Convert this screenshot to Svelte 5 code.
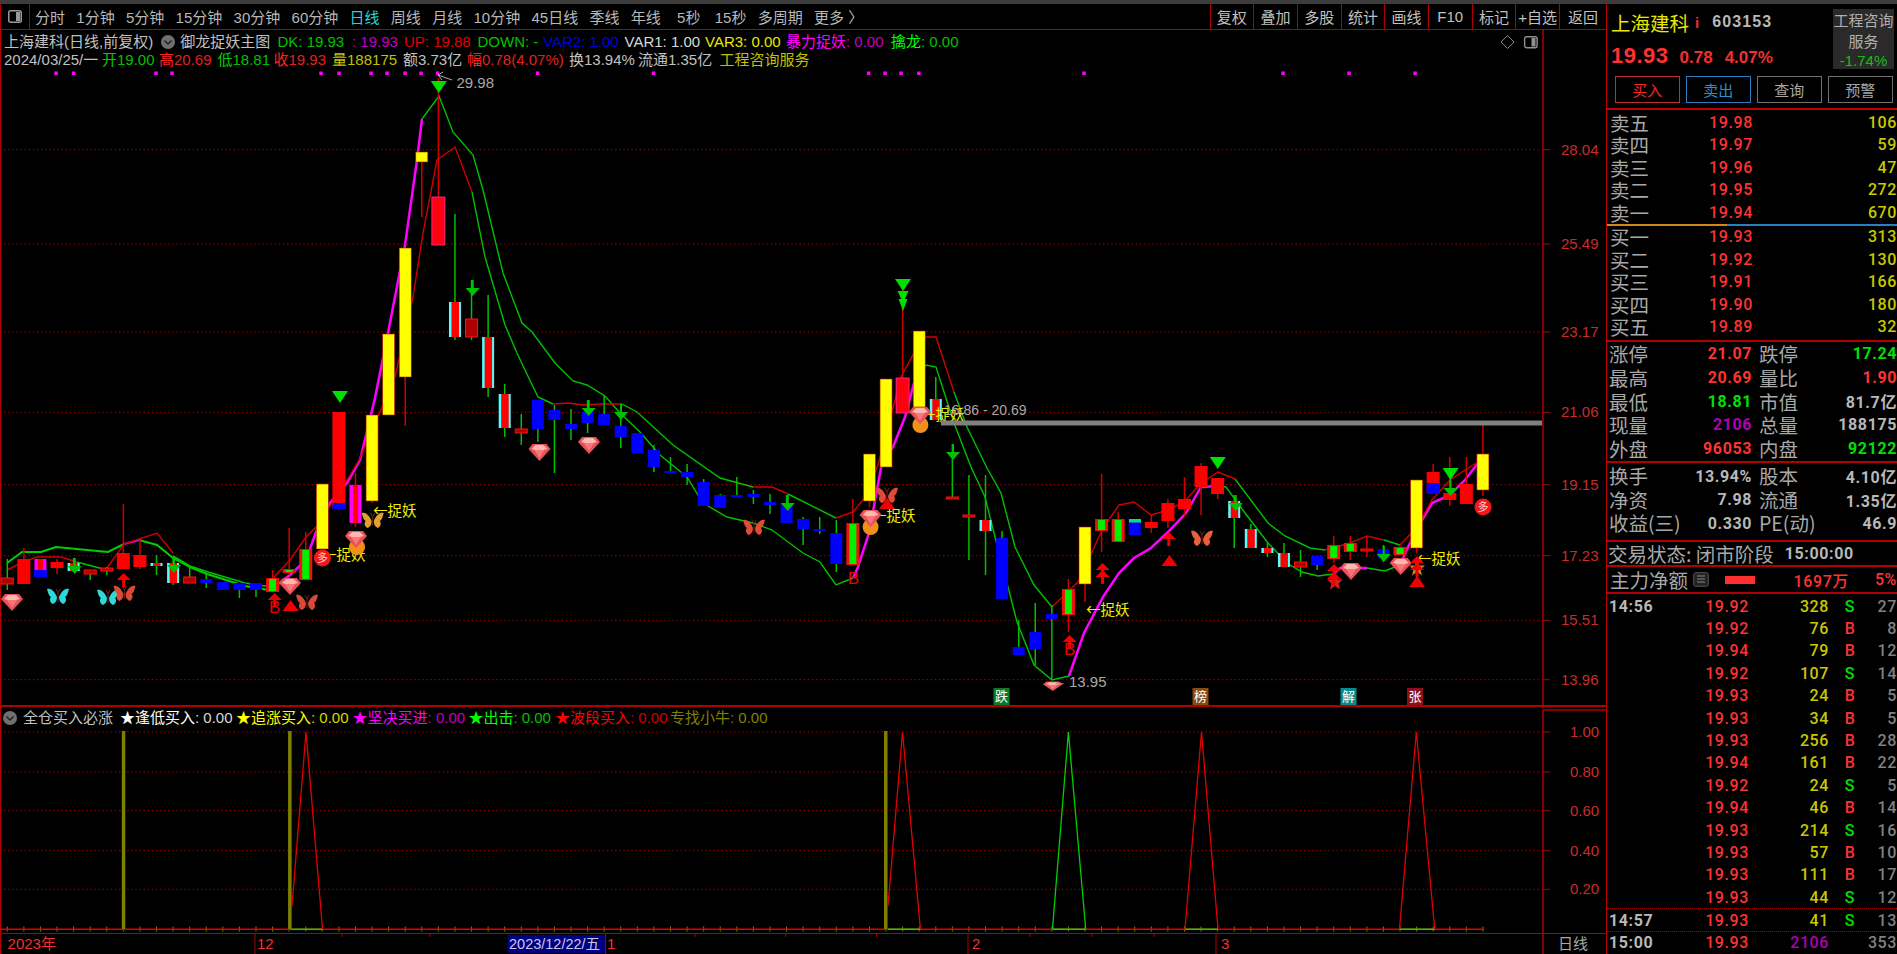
<script>
	const step = 16.58;
	const cx = (i) => 7.3 + step * i;

	// wick top, body top, body bottom, wick bottom, type, wick colour, split y (blue lower part)
	const candles = [
		[559, 578, 584, 590, 'o', 'g'], [548, 559, 584, 584, 'r', 'r'], [559, 559, 577, 575, 'm', 'g', 570],
		[559, 562, 568, 574, 'r', 'r'], [558, 563, 571, 572, 'c', 'g'], [570, 570, 574, 580, 'o', 'g'],
		[567, 568, 571, 575, 'o', 'g'], [504, 553, 569, 569, 'r', 'r'], [540, 555, 567, 569, 'r', 'r'],
		[555, 563, 566, 575, 'c', 'g'], [557, 563, 583, 585, 'c', 'g'], [567, 577, 583, 583, 'o', 'g'],
		[574, 579, 583, 588, 'b', 'g'], [582, 582, 590, 590, 'b', 'g'], [583, 583, 590, 598, 'b', 'g'],
		[583, 583, 590, 597, 'b', 'g'], [570, 578, 592, 592, 'g', 'r'], [528, 569, 573, 575, 'g', 'r'],
		[532, 549, 580, 580, 'g', 'r'], [484, 484, 549, 549, 'y', 'r'], [412, 412, 509, 509, 'r', 'r', 503],
		[473, 485, 523, 527, 'm', 'r'], [415, 415, 501, 503, 'y', 'r'], [334, 334, 415, 415, 'y', 'r'],
		[248, 248, 377, 426, 'y', 'r'], [152, 152, 162, 217, 'y', 'r'], [78, 197, 245, 245, 'p', 'r'],
		[214, 302, 337, 340, 'c', 'g'], [280, 319, 337, 340, 'o', 'g'], [295, 337, 388, 397, 'c', 'g'],
		[384, 394, 428, 437, 'c', 'g'], [414, 429, 433, 445, 'o', 'g'], [400, 400, 429, 442, 'b', 'g'],
		[405, 410, 420, 473, 'b', 'g'], [409, 424, 429, 440, 'b', 'g'], [400, 412, 423, 433, 'b', 'g'],
		[396, 414, 425, 425, 'b', 'g'], [404, 426, 437, 448, 'b', 'g'], [433, 433, 453, 453, 'b', 'g'],
		[445, 450, 467, 472, 'b', 'g'], [457, 471, 473, 473, 'b', 'g'], [464, 472, 477, 485, 'b', 'g'],
		[479, 482, 506, 506, 'b', 'g'], [494, 495, 508, 508, 'b', 'g'], [477, 495, 497, 497, 'b', 'g'],
		[490, 494, 497, 504, 'b', 'g'], [494, 502, 505, 514, 'b', 'g'], [495, 503, 523, 523, 'b', 'g'],
		[517, 519, 529, 545, 'b', 'g'], [517, 529, 531, 534, 'b', 'g'], [520, 533, 564, 572, 'b', 'g'],
		[499, 523, 565, 565, 'g', 'r'], [454, 454, 501, 507, 'y', 'r'], [379, 379, 467, 467, 'y', 'r'],
		[280, 378, 413, 413, 'p', 'r'], [331, 331, 407, 407, 'y', 'r'], [377, 399, 420, 420, 'c', 'g'],
		[444, 497, 499, 499, 'o', 'g'], [475, 515, 517, 560, 'o', 'g'], [475, 520, 531, 575, 'c', 'g'],
		[531, 538, 599, 599, 'b', 'g'], [620, 647, 655, 655, 'b', 'g'], [603, 632, 649, 665, 'b', 'g'],
		[605, 614, 619, 680, 'b', 'g'], [579, 589, 615, 632, 'g', 'r'], [527, 527, 584, 602, 'y', 'r'],
		[474, 519, 531, 552, 'g', 'r'], [512, 519, 542, 542, 'g', 'r'], [519, 519, 535, 535, 'b', 'r'],
		[515, 522, 528, 533, 'r', 'r'], [499, 503, 521, 528, 'r', 'r'], [477, 499, 509, 517, 'r', 'r'],
		[463, 466, 487, 515, 'r', 'r'], [478, 478, 494, 499, 'r', 'r'], [495, 501, 518, 548, 'c', 'g'],
		[524, 529, 548, 548, 'c', 'g'], [543, 548, 553, 557, 'c', 'g'], [543, 553, 567, 567, 'c', 'g'],
		[550, 562, 567, 577, 'o', 'g'], [556, 556, 565, 570, 'b', 'g'], [536, 545, 559, 563, 'g', 'r'],
		[536, 543, 552, 560, 'g', 'r'], [536, 549, 551, 557, 'o', 'r'], [545, 549, 558, 562, 'b', 'g'],
		[546, 547, 555, 555, 'g', 'r'], [480, 480, 548, 553, 'y', 'r'], [464, 472, 494, 494, 'r', 'r', 483],
		[457, 493, 500, 506, 'r', 'r'], [457, 484, 504, 504, 'r', 'r'], [425, 454, 490, 496, 'y', 'r']
	];

	const lines = [
		{ c: '#00d000', w: 2, p: '7,563 22,552 41,552 56,547 108,552 124,544' },
		{ c: '#ff00ff', w: 2, p: '124,544 139,540' },
		{ c: '#00d000', w: 2, p: '139,540 157,545 173,558 190,567 207,574 245,586 274,591' },
		{ c: '#ff00ff', w: 2.5, p: '274,587 290,575 306,560 316,532 330,503 347,483 360,460 375,398 388,333 405,245 417,160 422,119' },
		{ c: '#00c000', w: 1.4, p: '422,119 439,96 453,132 473,155 483,190 503,273 522,323 532,332 555,363 562,370 573,381 587,385 605,396 620,413 640,432 660,455 687,477 698,495 708,506 727,517 753,523 772,530 803,553 820,562 836,585 853,578' },
		{ c: '#ff00ff', w: 2.5, p: '853,578 858,567 869,533 881,468 893,447 905,417 914,383' },
		{ c: '#00c000', w: 1.4, p: '914,383 926,365 936,367 954,423 971,467 985,497 995,537 1008,587 1017,622 1034,665 1052,680 1069,676' },
		{ c: '#ff00ff', w: 2.5, p: '1069,676 1084,633 1103,597 1119,573 1134,558 1151,548 1168,532 1186,513 1201,487 1218,486' },
		{ c: '#00c000', w: 1.4, p: '1218,486 1226,487 1245,513 1268,543 1287,563 1302,572 1318,576 1333,574' },
		{ c: '#ff00ff', w: 2.5, p: '1333,574 1340,568 1367,568' },
		{ c: '#00c000', w: 1.4, p: '1367,568 1385,571 1400,565' },
		{ c: '#ff00ff', w: 2.5, p: '1400,565 1408,547 1421,522 1432,503 1450,495 1465,480 1478,463' },
		{ c: '#d00000', w: 1.4, p: '7,570 25,561 37,557 61,557 77,562' },
		{ c: '#00c000', w: 1.6, p: '77,562 107,570' },
		{ c: '#d00000', w: 1.4, p: '107,568 124,544 157,533 173,553' },
		{ c: '#00c000', w: 1.6, p: '173,556 190,566 208,572 245,583 265,586 273,584' },
		{ c: '#d00000', w: 1.4, p: '273,578 290,560 306,537 316,527 349,477 359,460 395,377 413,297 423,233 437,160 455,147 472,192' },
		{ c: '#00c000', w: 1.4, p: '472,192 485,257 505,325 517,353 525,370 538,397 553,404' },
		{ c: '#d00000', w: 1.4, p: '553,404 568,403 583,405 600,404 622,404' },
		{ c: '#00c000', w: 1.4, p: '622,404 637,412 673,445 720,478 753,487' },
		{ c: '#d00000', w: 1.4, p: '753,487 772,487 788,494' },
		{ c: '#00c000', w: 1.4, p: '788,494 836,518' },
		{ c: '#d00000', w: 1.4, p: '836,518 853,512 863,500 878,465 901,377 914,353 926,337 936,337 954,392' },
		{ c: '#00c000', w: 1.4, p: '954,392 967,427 987,468 1001,493 1015,547 1034,585 1052,607' },
		{ c: '#d00000', w: 1.4, p: '1052,607 1078,582 1092,552 1103,528 1119,505 1134,502 1151,515 1168,510 1184,502 1201,483 1218,472 1235,479' },
		{ c: '#00c000', w: 1.4, p: '1235,479 1268,523 1285,536 1310,548 1325,550' },
		{ c: '#d00000', w: 1.4, p: '1325,550 1350,543 1367,536 1384,540' },
		{ c: '#00c000', w: 1.4, p: '1384,540 1400,545' },
		{ c: '#d00000', w: 1.4, p: '1400,545 1417,527 1432,500 1450,480 1465,470 1478,462' }
	];

	const grid = [
		{ y: 149.7, t: '28.04' }, { y: 244, t: '25.49' }, { y: 332, t: '23.17' }, { y: 412.3, t: '21.06' },
		{ y: 484.7, t: '19.15' }, { y: 555.7, t: '17.23' }, { y: 620.3, t: '15.51' }, { y: 679.7, t: '13.96' }
	];
	const subGrid = [
		{ y: 732, t: '1.00' }, { y: 772, t: '0.80' }, { y: 810.7, t: '0.60' }, { y: 850.7, t: '0.40' }, { y: 889.3, t: '0.20' }
	];
	const dots = [56, 73.5, 156, 172, 321, 339, 371, 387, 405, 421, 437.5, 537.5, 653.5, 868.6, 885, 901, 918.8, 1084, 1283, 1349, 1415];

	const gems = [[12, 602], [290, 586], [356, 539], [539.5, 452], [589, 445], [920, 415], [870.6, 518], [1351, 571], [1400.7, 566]];
	const flies = [
		[58, 596, '#2fd8d8'], [108, 597, '#2fd8d8'], [124.5, 593, '#d84a36'], [307, 602, '#d84a36'], [372.7, 520, '#e0a030'],
		[754, 527, '#e04a36'], [887, 495, '#e04a36'], [1202, 538, '#e8603c']
	];
	const bigDown = [[438.8, 87, 16], [340, 397, 16], [903, 285, 16], [903, 297, 11], [903, 305, 9], [1217.8, 463, 16], [1450.5, 474, 16]];
	const downArrows = [[74.7, 558], [174, 557], [472.7, 280], [588.7, 400], [621, 404], [787.8, 495], [953, 444], [1235.7, 495], [1383.8, 546], [1450.5, 480]];
	const upArrows = [[123.7, 573], [274.7, 593], [1102.6, 563], [1102.6, 570], [1168.8, 532], [1069.6, 635], [1334, 564], [1334, 572], [1417, 556], [1417, 563]];
	const triangles = [[290.6, 606], [887, 504], [1169.5, 561], [1417, 582]];
	const stars = [[1335, 582, '#d02020'], [1417, 568, '#c88020']];
	const letters = [[274.7, 613], [853.3, 584], [1069.6, 655]];
	const balls = [[322.4, 558, '#f01818'], [1483, 507, '#f01818']];
	const orangeBalls = [[357, 547], [920.4, 425], [870.6, 527]];
	const catchers = [[373, 516], [322, 560], [872, 521], [921, 420], [1086, 615], [1417, 564]];
	const badges = [
		{ x: 1001.5, t: '跌', c: '#0a7a2a' }, { x: 1200.5, t: '榜', c: '#8a4a10' },
		{ x: 1348.5, t: '解', c: '#0a8a8a' }, { x: 1415, t: '张', c: '#8a1020' }
	];

	const olive = [123.5, 289.8, 885.7];
	const peaks = [
		{ l: 292, t: 906, a: 306, r: 322.5, c: '#e00000', b: 291 },
		{ l: 888, t: 906, a: 902.5, r: 920.4, c: '#e00000', b: 888 },
		{ l: 1052.5, t: 929, a: 1068.4, r: 1085.7, c: '#00d000', b: 1052.5 },
		{ l: 1185, t: 929, a: 1201.5, r: 1218, c: '#e00000', b: 1185 },
		{ l: 1399.5, t: 929, a: 1416.3, r: 1434.7, c: '#e00000', b: 1399.5 }
	];
	const dateTicks = [342, 430, 695, 785.7, 876.5, 1030, 1092, 1154];

	const tabs = [
		{ t: '分时' }, { t: '1分钟' }, { t: '5分钟' }, { t: '15分钟' }, { t: '30分钟' }, { t: '60分钟' },
		{ t: '日线', on: true }, { t: '周线' }, { t: '月线' }, { t: '10分钟' }, { t: '45日线' }, { t: '季线' },
		{ t: '年线' }, { t: '5秒', m: 5 }, { t: '15秒', m: 3 }, { t: '多周期' }, { t: '更多 〉' }
	];
	const tools = ['复权', '叠加', '多股', '统计', '画线', 'F10', '标记', '+自选', '返回'];

	const legendA = [
		{ w: 273.5, l: '', v: '', title: true },
		{ w: 74.5, l: 'DK: 19.93', v: '', c: '#00c000' },
		{ w: 52, l: ': 19.93', v: '', c: '#c000c0' },
		{ w: 73.5, l: 'UP: 19.88', v: '', c: '#e00000' },
		{ w: 65.5, l: 'DOWN: -', v: '', c: '#00c000' },
		{ w: 81.5, l: 'VAR2: 1.00', v: '', c: '#0000e0' },
		{ w: 80.5, l: 'VAR1: 1.00', v: '', c: '#d8d8d8' },
		{ w: 81, l: 'VAR3: 0.00', v: '', c: '#e8e800' },
		{ w: 105, l: '暴力捉妖', v: ': 0.00', c: '#ff00ff', d: '#c000c0' },
		{ w: 90, l: '擒龙', v: ': 0.00', c: '#00ff00', d: '#00c000' }
	];
	const legendB = [
		{ w: 98, l: '2024/03/25/一', v: '', c: '#c0c0c0' },
		{ w: 57, l: '开', v: '19.00', c: '#00d000', d: '#00c000' },
		{ w: 58.5, l: '高', v: '20.69', c: '#ff2020', d: '#e02020' },
		{ w: 56, l: '低', v: '18.81', c: '#00d000', d: '#00c000' },
		{ w: 58.5, l: '收', v: '19.93', c: '#ff2020', d: '#e02020' },
		{ w: 71, l: '量', v: '188175', c: '#c0c000', d: '#c0c000' },
		{ w: 64, l: '额', v: '3.73亿', c: '#c0c0c0', d: '#c0c0c0' },
		{ w: 102, l: '幅', v: '0.78(4.07%)', c: '#ff2020', d: '#e02020' },
		{ w: 69, l: '换', v: '13.94%', c: '#c0c0c0', d: '#c0c0c0' },
		{ w: 81.6, l: '流通', v: '1.35亿', c: '#c0c0c0', d: '#c0c0c0' },
		{ w: 110, l: '工程咨询服务', v: '', c: '#c0c000' }
	];
	const subLegend = [
		{ w: 116, s: '★', l: '逢低买入', v: ': 0.00', c: '#ffffff', d: '#d8d8d8' },
		{ w: 116.6, s: '★', l: '追涨买入', v: ': 0.00', c: '#ffff00', d: '#d8d800' },
		{ w: 115.8, s: '★', l: '坚决买进', v: ': 0.00', c: '#ff00ff', d: '#c000c0' },
		{ w: 86.6, s: '★', l: '出击', v: ': 0.00', c: '#00ff00', d: '#00c000' },
		{ w: 115, s: '★', l: '波段买入', v: ': 0.00', c: '#ff0000', d: '#d00000' },
		{ w: 110, s: '', l: '专找小牛', v: ': 0.00', c: '#808000', d: '#808000' }
	];

	const sell = [['卖五', '19.98', '106'], ['卖四', '19.97', '59'], ['卖三', '19.96', '47'], ['卖二', '19.95', '272'], ['卖一', '19.94', '670']];
	const buy = [['买一', '19.93', '313'], ['买二', '19.92', '130'], ['买三', '19.91', '166'], ['买四', '19.90', '180'], ['买五', '19.89', '32']];
	const stats = [
		['涨停', '21.07', 'up', '跌停', '17.24', 'down'],
		['最高', '20.69', 'up', '量比', '1.90', 'up'],
		['最低', '18.81', 'down', '市值', '81.7亿', 'flat'],
		['现量', '2106', 'vol', '总量', '188175', 'flat'],
		['外盘', '96053', 'up', '内盘', '92122', 'down']
	];
	const stats2 = [
		['换手', '13.94%', 'flat', '股本', '4.10亿', 'flat'],
		['净资', '7.98', 'flat', '流通', '1.35亿', 'flat'],
		['收益(三)', '0.330', 'flat', 'PE(动)', '46.9', 'flat']
	];
	const trades = [
		['14:56', '19.92', '328', 'S', '27'], ['', '19.92', '76', 'B', '8'], ['', '19.94', '79', 'B', '12'],
		['', '19.92', '107', 'S', '14'], ['', '19.93', '24', 'B', '5'], ['', '19.93', '34', 'B', '5'],
		['', '19.93', '256', 'B', '28'], ['', '19.94', '161', 'B', '22'], ['', '19.92', '24', 'S', '5'],
		['', '19.94', '46', 'B', '14'], ['', '19.93', '214', 'S', '16'], ['', '19.93', '57', 'B', '10'],
		['', '19.93', '111', 'B', '17'], ['', '19.93', '44', 'S', '12'], ['14:57', '19.93', '41', 'S', '13'],
		['15:00', '19.93', '2106', '', '353']
	];
</script>

<div class="app">
	<div class="strip"></div>
	<div class="main">
		<div class="left">
			<nav class="toolbar">
				<div class="panel-btn">
					<svg width="14" height="13" viewBox="0 0 14 13">
						<rect x="0.75" y="0.75" width="12.5" height="11.5" rx="2" fill="none" stroke="#9a9a9a" stroke-width="1.5" />
						<rect x="8" y="2" width="4" height="9" fill="#9a9a9a" />
					</svg>
				</div>
				<div class="tabs">
					{#each tabs as tab}
						<span class:on={tab.on} style={tab.m ? `margin-left:${tab.m}px` : undefined}>{tab.t}</span>
					{/each}
				</div>
				<div class="tools">
					{#each tools as tool}
						<span>{tool}</span>
					{/each}
				</div>
			</nav>

			<section class="chart">
				<div class="legend">
					<div class="row">
						<div class="title" style="width:{legendA[0].w}px">
							<span>上海建科(日线,前复权)</span>
							<svg class="chev" width="14" height="14" viewBox="0 0 14 14">
								<circle cx="7" cy="7" r="7" fill="#707070" />
								<path d="M3.5 5.5 L7 9 L10.5 5.5" fill="none" stroke="#222" stroke-width="1.5" />
							</svg>
							<span>御龙捉妖主图</span>
						</div>
						{#each legendA.slice(1) as item}
							<div style="width:{item.w}px;color:{item.c}">{item.l}<span style="color:{item.d}">{item.v}</span></div>
						{/each}
					</div>
					<div class="row">
						{#each legendB as item}
							<div style="width:{item.w}px;color:{item.c}">{item.l}<span style="color:{item.d}">{item.v}</span></div>
						{/each}
					</div>
				</div>

				<svg class="plot" width="1606" height="677" viewBox="0 30 1606 677">
					<defs>
						<g id="gem">
							<path d="M-11 -3 L-7 -8 L7 -8 L11 -3 L0 9 Z" fill="#e8505a" />
							<path d="M-8 -3 L-4 -7 L4 -7 L8 -3 L0 -1 Z" fill="#ffb8b0" />
							<path d="M-5 -2 L0 6 L5 -2 Z" fill="#f87878" />
						</g>
						<g id="fly">
							<path d="M-1 1 C-4 -6 -8 -8 -11 -7 C-10 -3 -9 0 -7 1 C-9 3 -8 7 -5 8 C-3 7 -1 5 -1 1 Z" />
							<path d="M1 1 C4 -6 8 -8 11 -7 C10 -3 9 0 7 1 C9 3 8 7 5 8 C3 7 1 5 1 1 Z" />
							<path d="M0 -3 L0 6 M0 -3 L-2 -7 M0 -3 L2 -7" stroke="#702020" stroke-width="1" fill="none" />
						</g>
						<g id="down">
							<path d="M-1 0 H1 V8 H7 L0 16 L-7 8 H-1 Z" fill="#00c000" />
						</g>
						<g id="up">
							<path d="M0 0 L7 7 H1.5 V14 H-1.5 V7 H-7 Z" fill="#f00000" />
						</g>
						<g id="star">
							<polygon points="0,-8 2.4,-2.5 8,-2.5 3.6,1.5 5,7.5 0,4 -5,7.5 -3.6,1.5 -8,-2.5 -2.4,-2.5" />
						</g>
					</defs>

					<line class="tick wide" x1="0.5" x2="0.5" y1="30" y2="707" />
					<line class="tick wide" x1="1543" x2="1543" y1="30" y2="707" />

					{#each grid as g}
						<line class="dot" x1="0" x2="1542" y1={g.y} y2={g.y} />
						<line class="tick" x1="1543" x2="1550" y1={g.y} y2={g.y} />
						<text class="axis" x="1561" y={g.y + 5}>{g.t}</text>
					{/each}

					{#each dots as x}
						<rect x={x - 1.7} y="71.5" width="3.5" height="3.5" fill="#ff00ff" />
					{/each}

					{#each lines as line}
						<polyline points={line.p} fill="none" stroke={line.c} stroke-width={line.w} />
					{/each}

					{#each candles as [wt, t, b, wb, type, wick, split], i}
						{@const x = cx(i)}
						<line x1={x} x2={x} y1={wt} y2={wb} stroke={wick === 'r' ? '#d00000' : '#00c000'} stroke-width="1.5" />
						{#if type === 'r'}
							<rect x={x - 6.5} y={t} width="13" height={b - t} fill="#ff0000" />
						{:else if type === 'p'}
							<rect x={x - 6.5} y={t} width="13" height={b - t} fill="#ff0010" stroke="#ff30b0" stroke-width="0.8" />
						{:else if type === 'b'}
							<rect x={x - 6} y={t} width="12" height={b - t} fill="#0000ff" />
						{:else if type === 'y'}
							<rect x={x - 6} y={t} width="12" height={b - t} fill="#ffff00" stroke="#c01010" stroke-width="0.6" />
						{:else if type === 'o'}
							<rect x={x - 6} y={t} width="12" height={Math.max(b - t, 2)} fill="#b00000" stroke="#ff1010" />
						{:else if type === 'c'}
							<rect x={x - 6} y={t} width="12" height={b - t} fill="#50ffff" />
							<rect x={x - 3.5} y={t} width="7.5" height={b - t} fill="#ff0000" />
						{:else if type === 'g'}
							<rect x={x - 6.5} y={t} width="13" height={b - t} fill="#f01010" />
							<rect x={x - 3.5} y={t + 1} width="7" height={b - t - 2} fill="#00f000" />
						{:else if type === 'm'}
							<rect x={x - 6} y={t} width="12" height={b - t} fill="#ff00ff" />
							<rect x={x - 2.5} y={t} width="5" height={b - t} fill="#ff0000" />
						{/if}
						{#if split}
							<rect x={x - 6.5} y={split} width="13" height={b - split} fill="#0000ff" />
						{/if}
					{/each}
					<rect x="1129" y="519" width="12" height="3.5" fill="#00e080" />

					{#each catchers as [x, y]}
						<text class="catch" {x} {y}>←捉妖</text>
					{/each}
					{#each orangeBalls as [x, y]}
						<circle cx={x} cy={y} r="8" fill="#f09018" />
					{/each}
					{#each gems as [x, y]}
						<use href="#gem" {x} {y} />
					{/each}
					<use href="#gem" x="0" y="0" transform="translate(1052.8 686) scale(0.9 0.55)" />
					{#each flies as [x, y, c]}
						<use href="#fly" {x} {y} fill={c} />
					{/each}
					{#each bigDown as [x, y, w]}
						<polygon points="{x - w / 2},{y - 6} {x + w / 2},{y - 6} {x},{y + 6}" fill="#00e000" />
					{/each}
					{#each downArrows as [x, y]}
						<use href="#down" {x} {y} />
					{/each}
					{#each stars as [x, y, c]}
						<use href="#star" {x} {y} fill={c} />
					{/each}
					{#each upArrows as [x, y]}
						<use href="#up" {x} {y} />
					{/each}
					{#each triangles as [x, y]}
						<polygon points="{x - 8},{y + 5} {x + 8},{y + 5} {x},{y - 6}" fill="#f00000" />
					{/each}
					{#each letters as [x, y]}
						<text class="letter" {x} {y}>B</text>
					{/each}
					{#each balls as [x, y, c]}
						<circle cx={x} cy={y} r="8.5" fill={c} />
						<text class="ball" {x} y={y + 4}>多</text>
					{/each}

					<rect x="941" y="420.5" width="601" height="5" fill="#808080" />
					<text class="note" x="944" y="415">16.86 - 20.69</text>
					<path d="M438 75 L452 80 M438 75 L443 72 M438 75 L442 80" stroke="#b0b0b0" fill="none" />
					<text class="note big" x="456.5" y="88">29.98</text>
					<text class="note big" x="1069" y="687">13.95</text>
					<text class="note big" x="1052" y="686">←</text>

					{#each badges as b}
						<rect x={b.x - 8} y="688" width="16" height="17" fill={b.c} />
						<text class="badge" x={b.x} y="701">{b.t}</text>
					{/each}

					<g transform="translate(1507.6 42)">
						<path d="M0 -6.5 L6.5 0 L0 6.5 L-6.5 0 Z" fill="none" stroke="#909090" />
					</g>
					<rect x="1524.6" y="36.7" width="12.5" height="11" rx="2" fill="none" stroke="#909090" stroke-width="1.4" />
					<rect x="1531.5" y="38" width="4" height="8.5" fill="#909090" />
				</svg>
			</section>

			<section class="sub">
				<div class="legend">
					<div class="row">
						<div class="title sub-title">
							<svg width="14" height="14" viewBox="0 0 14 14">
								<circle cx="7" cy="7" r="7" fill="#707070" />
								<path d="M3.5 5.5 L7 9 L10.5 5.5" fill="none" stroke="#222" stroke-width="1.5" />
							</svg>
							<span>全仓买入必涨</span>
						</div>
						{#each subLegend as item}
							<div style="width:{item.w}px;color:{item.c}">{item.s}{item.l}<span style="color:{item.d}">{item.v}</span></div>
						{/each}
					</div>
				</div>
				<svg class="plot" width="1606" height="226" viewBox="0 707 1606 226">
					<line class="tick wide" x1="0.5" x2="0.5" y1="707" y2="933" />
					<line class="tick wide" x1="1543" x2="1543" y1="710" y2="933" />
					<line class="tick wide" x1="1543" x2="1606" y1="710" y2="710" />
					{#each subGrid as g}
						<line class="dot" x1="0" x2="1542" y1={g.y} y2={g.y} />
						<line class="tick" x1="1543" x2="1550" y1={g.y} y2={g.y} />
						<text class="axis" x="1570" y={g.y + 5}>{g.t}</text>
					{/each}
					{#each candles as _, i}
						<line x1={cx(i)} x2={cx(i)} y1="926.5" y2="931.5" stroke="#808000" />
					{/each}
					<line x1="0" x2="1484" y1="929.3" y2="929.3" stroke="#e00000" stroke-width="1.5" />
					{#each olive as x}
						<rect x={x - 1.7} y="731" width="3.5" height="198" fill="#808000" />
					{/each}
					{#each peaks as p}
						<line x1={p.b} x2={p.r} y1="929.3" y2="929.3" stroke="#00e000" stroke-width="1.5" />
						<polyline points="{p.l},{p.t} {p.a},732 {p.r},929" fill="none" stroke={p.c} stroke-width="1.3" />
					{/each}
				</svg>
			</section>

			<svg class="dates" width="1606" height="20" viewBox="0 933 1606 20">
				<rect x="507.6" y="934" width="98" height="18" fill="#000080" />
				<line class="tick wide" x1="0.5" x2="0.5" y1="933" y2="953" />
				<line class="tick wide" x1="1543" x2="1543" y1="933" y2="953" />
				<line x1="255" x2="255" y1="933" y2="953" class="tick" />
				<line x1="968" x2="968" y1="933" y2="953" class="tick" />
				<line x1="1216" x2="1216" y1="933" y2="953" class="tick" />
				<line x1="605.6" x2="605.6" y1="933" y2="953" class="tick" />
				{#each dateTicks as x}
					<line x1={x} x2={x} y1="933" y2="936" class="tick" />
				{/each}
				<text class="date" x="7.6" y="948">2023年</text>
				<text class="date" x="257" y="948">12</text>
				<text class="date sel" x="509" y="948">2023/12/22/五</text>
				<text class="date" x="607" y="948">1</text>
				<text class="date" x="972" y="948">2</text>
				<text class="date" x="1221" y="948">3</text>
				<text class="date gray" x="1558" y="948">日线</text>
			</svg>
		</div>

		<aside class="side">
			<header class="head">
				<div class="head-top">
					<div class="head-info">
						<div class="name-line">
							<span class="name">上海建科</span>
							<span class="info-i">i</span>
							<span class="code">603153</span>
						</div>
						<div class="price-line">
							<span class="price">19.93</span>
							<span class="delta">0.78</span>
							<span class="delta">4.07%</span>
						</div>
					</div>
					<div class="sector">
						<span>工程咨询</span>
						<span>服务</span>
						<span class="sector-pct">-1.74%</span>
					</div>
				</div>
				<div class="actions">
					<button class="buy">买入</button>
					<button class="sell">卖出</button>
					<button>查询</button>
					<button>预警</button>
				</div>
			</header>

			<div class="book sell-side">
				{#each sell as [l, p, v]}
					<div class="book-row"><span class="lab">{l}</span><b class="up">{p}</b><b class="qty">{v}</b></div>
				{/each}
			</div>
			<div class="book-split"></div>
			<div class="book">
				{#each buy as [l, p, v]}
					<div class="book-row"><span class="lab">{l}</span><b class="up">{p}</b><b class="qty">{v}</b></div>
				{/each}
			</div>

			<div class="stats first">
				{#each stats as [a, b, c, d, e, f]}
					<div class="stat-row">
						<span class="lab">{a}</span><b class={c}>{b}</b>
						<span class="lab">{d}</span><b class={f}>{e}</b>
					</div>
				{/each}
			</div>
			<div class="stats second">
				{#each stats2 as [a, b, c, d, e, f]}
					<div class="stat-row">
						<span class="lab">{a}</span><b class={c}>{b}</b>
						<span class="lab">{d}</span><b class={f}>{e}</b>
					</div>
				{/each}
			</div>

			<div class="status"><span class="lab">交易状态: 闭市阶段</span><b class="flat">15:00:00</b></div>
			<div class="flow">
				<span class="lab">主力净额</span>
				<svg width="16" height="15" viewBox="0 0 16 15">
					<rect x="0.7" y="0.7" width="14.6" height="13.6" rx="2" fill="#222" stroke="#555" />
					<path d="M4 4 H12 M4 7 H12 M4 10 H12" stroke="#888" />
				</svg>
				<i class="flow-bar"></i>
				<b class="up flow-val">1697万</b>
				<b class="up flow-pct">5%</b>
			</div>

			<div class="trades">
				{#each trades as [time, p, v, s, n]}
					<div class="trade" class:dotted={time === '14:57' || time === '15:00'}>
						<b class="time">{time}</b>
						<b class="up t-price">{p}</b>
						<b class="t-vol" class:vol={v === '2106'}>{v}</b>
						<b class="t-side" class:up={s === 'B'} class:down={s === 'S'}>{s}</b>
						<b class="t-num">{n}</b>
					</div>
				{/each}
			</div>
		</aside>
	</div>
</div>

<style>
	:global(body) {
		margin: 0;
		background: #000;
	}
	.app {
		width: 1897px;
		height: 954px;
		background: #000;
		overflow: hidden;
		display: flex;
		flex-direction: column;
		font-family: 'Liberation Sans', 'Noto Sans CJK SC', sans-serif;
		font-size: 15px;
		color: #c0c0c0;
	}
	.strip {
		height: 4px;
		background: #3c3c3c;
		flex: none;
	}
	.main {
		display: flex;
		flex: 1;
		min-height: 0;
	}
	.left {
		width: 1606px;
		flex: none;
		display: flex;
		flex-direction: column;
	}
	.toolbar {
		height: 25px;
		flex: none;
		border-bottom: 1px solid #b00000;
		display: flex;
		align-items: stretch;
		white-space: nowrap;
	}
	.panel-btn {
		width: 28px;
		flex: none;
		border-left: 1px solid #b00000;
		border-right: 1px solid #b00000;
		display: flex;
		align-items: center;
		justify-content: center;
	}
	.tabs {
		display: flex;
		align-items: center;
		gap: 11.3px;
		padding-left: 5px;
		color: #b8b8b8;
	}
	.tabs .on {
		color: #30d0d8;
	}
	.tools {
		margin-left: auto;
		display: flex;
	}
	.tools span {
		width: 42.7px;
		border-left: 1px solid #b00000;
		display: flex;
		align-items: center;
		justify-content: center;
		color: #c0c0c0;
	}
	.tools span:last-child {
		width: 46px;
	}
	.chart {
		position: relative;
		height: 677px;
		flex: none;
		border-bottom: 2px solid #b00000;
		box-sizing: border-box;
	}
	.legend {
		position: absolute;
		top: 3px;
		left: 4px;
		z-index: 1;
		line-height: 17.6px;
		white-space: nowrap;
	}
	.row {
		display: flex;
		height: 17.6px;
	}
	.title {
		display: flex;
		align-items: center;
		gap: 8px;
		color: #c0c0c0;
	}
	.chev {
		flex: none;
		margin-right: -3px;
	}
	.plot {
		display: block;
	}
	.dot {
		stroke: #a80000;
		stroke-width: 1;
		stroke-dasharray: 1.5 2.6;
	}
	.tick {
		stroke: #b00000;
		stroke-width: 1;
	}
	.tick.wide {
		stroke-width: 1.5;
	}
	.axis {
		fill: #c82c2c;
		font-size: 15px;
	}
	.catch {
		fill: #f0f000;
		font-size: 14.5px;
		font-family: 'Noto Sans CJK SC', sans-serif;
	}
	.letter {
		fill: #f00000;
		font-size: 17px;
		text-anchor: middle;
	}
	.ball {
		fill: #ffd0d0;
		font-size: 11px;
		text-anchor: middle;
		font-family: 'Noto Sans CJK SC', sans-serif;
	}
	.note {
		fill: #a8a8a8;
		font-size: 14px;
	}
	.note.big {
		font-size: 15px;
	}
	.badge {
		fill: #fff;
		font-size: 13px;
		text-anchor: middle;
		font-family: 'Noto Sans CJK SC', sans-serif;
	}
	.sub {
		position: relative;
		height: 226px;
		flex: none;
		border-bottom: 1px solid #b00000;
		box-sizing: content-box;
	}
	.sub .legend {
		top: 2px;
		left: 3px;
	}
	.sub-title {
		width: 117px;
		gap: 6px;
		flex: none;
	}
	.dates {
		display: block;
		flex: none;
		border-bottom: 1px solid #b00000;
	}
	.date {
		fill: #f03030;
		font-size: 15px;
	}
	.date.sel {
		fill: #c8c8e8;
		font-size: 14.5px;
	}
	.date.gray {
		fill: #a8a8a8;
	}

	.side {
		width: 291px;
		flex: none;
		border-left: 1px solid #c00000;
		box-sizing: border-box;
		display: flex;
		flex-direction: column;
		min-width: 0;
		overflow: hidden;
	}
	.head {
		height: 106px;
		flex: none;
		border-bottom: 2px solid #c00000;
		box-sizing: border-box;
		padding: 6px 3px 0 8px;
		display: flex;
		flex-direction: column;
	}
	.head-top {
		display: flex;
		justify-content: space-between;
		height: 60px;
		margin-top: -1px;
		flex: none;
	}
	.head-info {
		margin-left: -4px;
	}
	.name-line {
		display: flex;
		align-items: center;
		height: 26px;
	}
	.name {
		font-size: 19.5px;
		color: #e8e800;
		font-family: 'Noto Sans CJK SC', sans-serif;
	}
	.info-i {
		color: #e83030;
		font-weight: bold;
		font-size: 15px;
		margin: 0 13px 0 6px;
	}
	.code {
		font-weight: bold;
		font-size: 16px;
		letter-spacing: 1.1px;
		color: #b8b8b8;
	}
	.price-line {
		display: flex;
		align-items: baseline;
		margin-top: 8px;
	}
	.price {
		font-weight: bold;
		font-size: 22px;
		color: #ff3030;
		letter-spacing: 0.5px;
		margin-right: 11px;
	}
	.delta {
		font-weight: bold;
		font-size: 17px;
		color: #f03030;
		margin-right: 12px;
	}
	.sector {
		width: 61px;
		height: 60px;
		background: #2a2a2a;
		display: flex;
		flex-direction: column;
		align-items: center;
		justify-content: space-around;
		font-size: 15px;
		color: #b0b0b0;
		margin-top: 0;
	}
	.sector-pct {
		color: #10c010;
	}
	.actions {
		display: flex;
		gap: 6.5px;
		margin-top: 7px;
	}
	.actions button {
		width: 64.5px;
		height: 27px;
		padding: 0;
		background: #000;
		border: 1px solid #707070;
		color: #a8a8a8;
		font: 15px 'Noto Sans CJK SC', sans-serif;
	}
	.actions .buy {
		border-color: #c03030;
		color: #f02828;
	}
	.actions .sell {
		border-color: #2a7fc0;
		color: #2a90d0;
	}
	.book {
		flex: none;
	}
	.sell-side {
		padding-top: 1px;
	}
	.book-row {
		display: grid;
		grid-template-columns: 99px 44px 1fr;
		align-items: center;
		height: 22.5px;
		padding-left: 3px;
	}
	.lab {
		font-size: 19.5px;
		color: #a8a8a8;
		font-family: 'Noto Sans CJK SC', sans-serif;
		font-weight: 400;
		line-height: 1;
		white-space: nowrap;
	}
	b {
		font-family: Roboto, 'Liberation Sans', 'Noto Sans CJK SC', sans-serif;
		font-weight: 500;
		font-size: 16px;
		letter-spacing: 0.6px;
		white-space: nowrap;
	}
	.up {
		color: #ff3232;
	}
	.down {
		color: #00e000;
	}
	.flat {
		color: #b8b8b8;
	}
	.vol {
		color: #b000b0;
	}
	.qty {
		text-align: right;
		color: #c8c800;
	}
	.book-split {
		height: 2px;
		flex: none;
		background: linear-gradient(to right, #d08818 120px, #2a7fc0 120px);
	}
	.stats {
		flex: none;
		border-top: 2px solid #b00000;
		box-sizing: border-box;
	}
	.first {
		height: 121px;
		margin-top: 2px;
	}
	.second {
		height: 79px;
		padding-top: 1px;
	}
	.stat-row {
		display: grid;
		grid-template-columns: 66px 77px 46px 1fr;
		column-gap: 0;
		align-items: center;
		height: 23.7px;
		padding-left: 2px;
	}
	.stat-row b {
		text-align: right;
		font-weight: 700;
	}
	.stat-row .lab:nth-of-type(2) {
		padding-left: 7px;
	}
	.status {
		height: 25px;
		flex: none;
		border-top: 2px solid #b00000;
		box-sizing: border-box;
		display: flex;
		align-items: center;
		gap: 11px;
		padding-left: 1px;
	}
	.status b {
		font-weight: 700;
	}
	.flow {
		height: 29px;
		flex: none;
		border-top: 2px solid #b00000;
		border-bottom: 2px solid #b00000;
		box-sizing: border-box;
		display: flex;
		align-items: center;
		padding-left: 3px;
	}
	.flow svg {
		margin-left: 5px;
		flex: none;
	}
	.flow-bar {
		display: block;
		width: 30px;
		height: 8px;
		background: #ff3030;
		margin-left: 16px;
	}
	.flow-val {
		margin-left: auto;
		margin-right: 26px;
	}
	.trades {
		flex: 1;
		padding-top: 1px;
	}
	.trade {
		display: grid;
		grid-template-columns: 50px 90px 1fr 38px 30px;
		align-items: center;
		height: 22.4px;
		box-sizing: border-box;
		padding-left: 2px;
	}
	.trade.dotted {
		border-top: 1px dotted #a00000;
	}
	.time {
		color: #b8b8b8;
		font-weight: 700;
	}
	.t-price {
		text-align: right;
	}
	.t-vol {
		text-align: right;
		color: #c8c800;
	}
	.t-vol.vol {
		color: #b000b0;
	}
	.t-side {
		text-align: center;
		padding-left: 4px;
	}
	.t-num {
		text-align: right;
		color: #808080;
	}
</style>
